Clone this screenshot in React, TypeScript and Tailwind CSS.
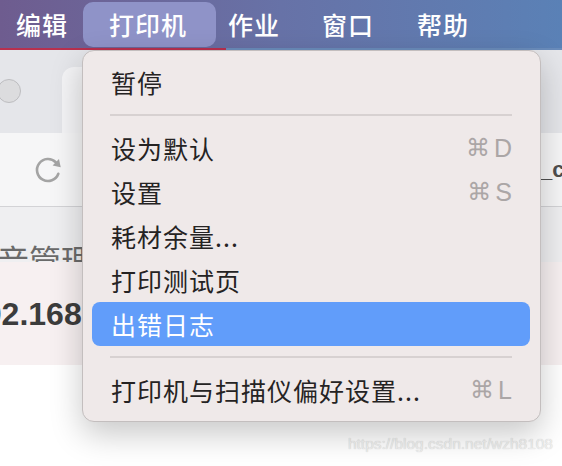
import { type ReactNode } from "react";

const cjk = "font-['Noto_Sans_CJK_SC','Noto_Sans',sans-serif]";

function ReloadIcon() {
  return (
    <svg width="30" height="30" viewBox="0 0 30 30" className="ml-[33px] shrink-0">
      <path d="M25.34 18.76 A11 11 0 1 1 22.78 7.22" fill="none" stroke="#a4a4a4" strokeWidth="2.6" strokeLinecap="round" />
      <path d="M25.96 4.04 L19.6 10.4 L27.73 12.17 Z" fill="#a4a4a4" />
    </svg>
  );
}

function Shortcut({ letter }: { letter: string }) {
  return (
    <span className="flex items-center gap-[4px] text-[#aba6a6]">
      <span className="font-['DejaVu_Sans',sans-serif] text-[24px] leading-none">⌘</span>
      <span className="font-['Liberation_Sans',sans-serif] text-[25px] leading-none">{letter}</span>
    </span>
  );
}

function MenuItem({ label, shortcut, active }: { label: ReactNode; shortcut?: string; active?: boolean }) {
  return (
    <div className={`mx-[9px] mr-[10px] flex h-[44px] items-center justify-between rounded-[8px] pl-[19px] pr-[18px] ${active ? "bg-[#619dfa] text-white" : "text-[#252323]"}`}>
      <span className={`${cjk} text-[25px] leading-none tracking-[1px]`}>{label}</span>
      {shortcut && <Shortcut letter={shortcut} />}
    </div>
  );
}

function Separator() {
  return (
    <div className="flex h-[22px] items-center pl-[27px] pr-[28px]">
      <div className="h-[2px] w-full bg-[#d7d1d1]" />
    </div>
  );
}

export default function App() {
  return (
    <div className="relative h-[466px] w-[562px] overflow-hidden bg-white">
      {/* menu bar */}
      <div className={`${cjk} flex h-[48px] items-center bg-gradient-to-r from-[#6e5c8f] via-[#6772a7] to-[#5a81b6] text-[25px] font-medium leading-none tracking-[1px] text-white`}>
        <span className="ml-[16px]">编辑</span>
        <span className="ml-[15px] flex h-[45px] w-[133px] items-center rounded-[10px] bg-[#8f93c8] pl-[26px]">打印机</span>
        <span className="ml-[12px]">作业</span>
        <span className="ml-[42px]">窗口</span>
        <span className="ml-[43px]">帮助</span>
      </div>
      <div className="flex h-[2px]">
        <div className="w-[226px] bg-[#b8304e]" />
        <div className="flex-1 bg-[#6a8cbb]" />
      </div>

      {/* browser tab bar */}
      <div className="flex h-[83px] bg-[#e5e6ea]">
        <div className="flex w-[62px] items-center">
          <div className="ml-[-3px] mt-[-1px] size-[24px] rounded-full border border-[#bdbdc0] bg-[#dcdcde]" />
        </div>
        <div className="mt-[17px] flex-1 rounded-t-[12px] bg-[#f4f4f6]" />
        <div className="w-[21px]" />
      </div>

      {/* toolbar */}
      <div className="flex h-[73px] items-center bg-[#f6f6f7]">
        <ReloadIcon />
        <span className="ml-[477px] shrink-0 whitespace-nowrap font-['Liberation_Sans',sans-serif] text-[22px] font-bold text-[#4f4f4f]">_config</span>
      </div>
      <div className="h-[1px] bg-[#d3d3d6]" />

      {/* table header */}
      <div className="h-[55px] overflow-hidden bg-[#efeff1]">
        <div className={`${cjk} ml-[-3px] whitespace-nowrap pt-[36px] text-[32px] leading-none text-[#6a6a6a]`}>音管理</div>
      </div>

      {/* table row */}
      <div className="flex h-[103px] items-center bg-[#f7f0f1]">
        <span className="ml-[-34px] shrink-0 whitespace-nowrap font-['Liberation_Sans',sans-serif] text-[32px] font-bold leading-none text-[#3c3c3c]">192.168.1.1</span>
      </div>

      <div className="absolute bottom-[11px] right-[9px] whitespace-nowrap font-['Liberation_Sans',sans-serif] text-[15.5px] text-[#f2f2f2] [text-shadow:0_0_1px_#c8c8c8]">
        https://blog.csdn.net/wzh8108
      </div>

      {/* dropdown menu */}
      <div className="absolute left-[82px] top-[50px] w-[459px] rounded-[12px] border border-[#c3bebe] bg-[#efe9e9] py-[9px] shadow-[0_12px_32px_rgba(0,0,0,0.22)]">
        <MenuItem label="暂停" />
        <Separator />
        <MenuItem label="设为默认" shortcut="D" />
        <MenuItem label="设置" shortcut="S" />
        <MenuItem label="耗材余量..." />
        <MenuItem label="打印测试页" />
        <MenuItem label="出错日志" active />
        <Separator />
        <MenuItem label="打印机与扫描仪偏好设置..." shortcut="L" />
      </div>
    </div>
  );
}
